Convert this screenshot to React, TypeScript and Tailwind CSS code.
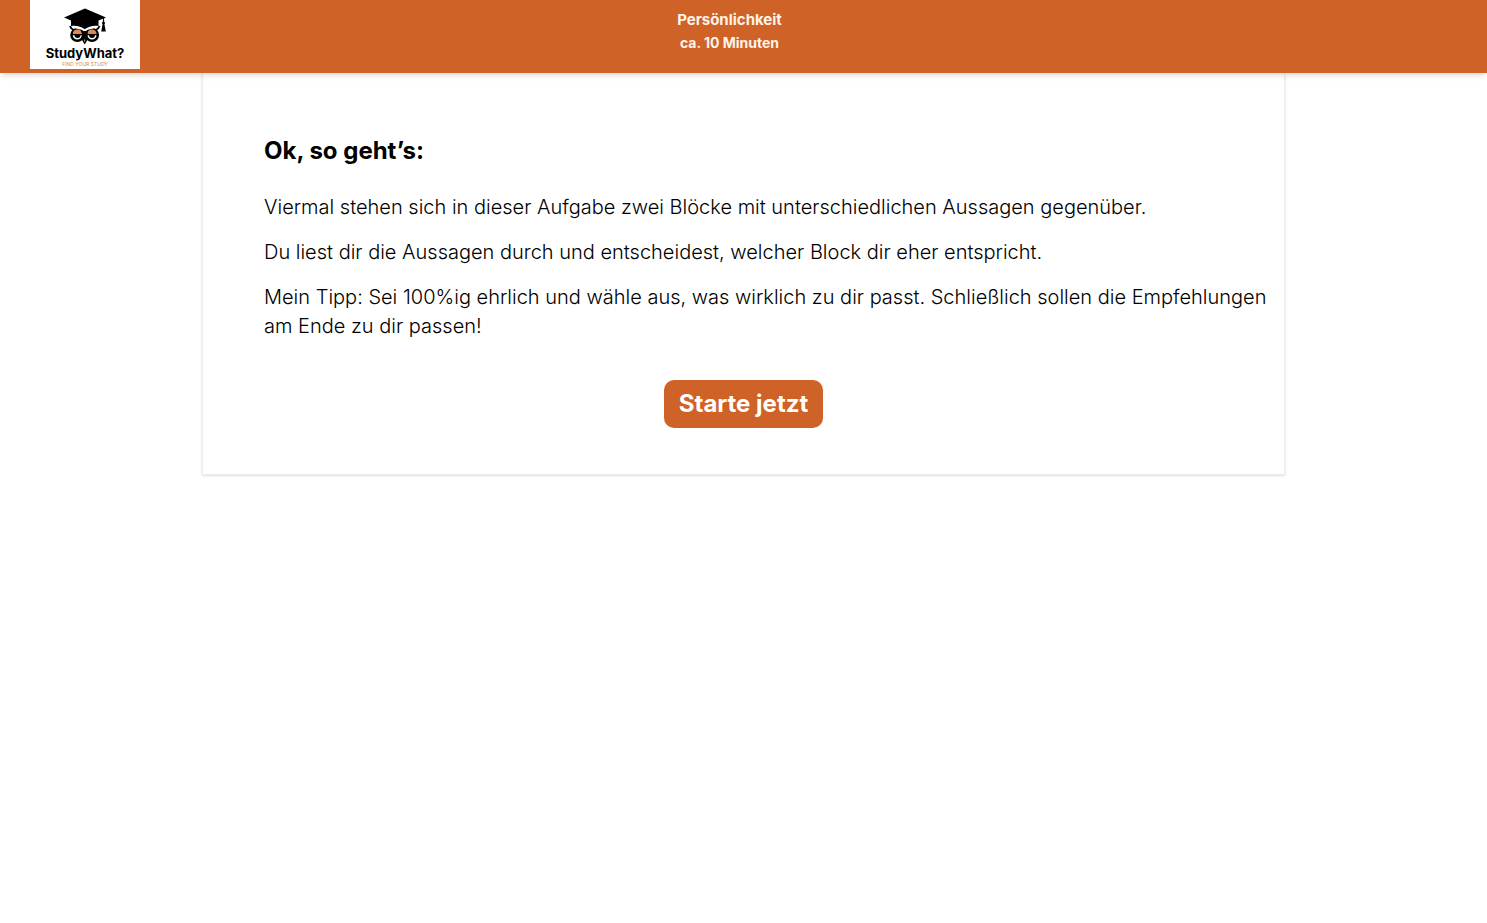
import React from 'react';

const paragraphs = [
  'Viermal stehen sich in dieser Aufgabe zwei Blöcke mit unterschiedlichen Aussagen gegenüber.',
  'Du liest dir die Aussagen durch und entscheidest, welcher Block dir eher entspricht.',
  'Mein Tipp: Sei 100%ig ehrlich und wähle aus, was wirklich zu dir passt. Schließlich sollen die Empfehlungen am Ende zu dir passen!',
];

const OwlIcon: React.FC = () => (
  <svg viewBox="0 0 44 38" className="h-[38px] w-[44px]" aria-hidden="true">
    {/* Brows */}
    <path d="M7 18c1 3.500 4 5 14.700 6.500C32.500 23 35.500 21.500 36.500 18" fill="none" stroke="#000" strokeWidth="1.800" />
    {/* Eyes */}
    <circle cx="14.300" cy="27" r="5.800" fill="#fff" stroke="#000" strokeWidth="2.600" />
    <circle cx="29" cy="27" r="5.800" fill="#fff" stroke="#000" strokeWidth="2.600" />
    <path d="M9.800 26a4.600 4.600 0 0 1 9-1.200V26zM33.500 26a4.600 4.600 0 0 0-9-1.200V26z" fill="#dd8a4c" />
    <path d="M9 26.600h10.500M24 26.600h10.500" stroke="#000" strokeWidth="1.300" />
    <path d="M11.500 27a3 3 0 0 0 6 0zM26 27a3 3 0 0 0 6 0z" fill="#000" />
    {/* Beak */}
    <path d="M18.500 23h6.400l-1 6 .8 2.500-3 5-3-5 .8-2.500z" fill="#000" />
    <path d="M21.700 31.500v2" stroke="#fff" strokeWidth=".8" />
    {/* Cap */}
    <path d="M8.500 12v5.500c3 3.600 8 3.400 13.200 5 5.200-1.600 10.200-1.400 13.300-5V12z" fill="#fff" />
    <path d="M22 .5 1 9.500l7 3v5.500c5-1 10 .5 13.700 3.300C25.500 18.500 30.500 17 35.500 18v-5.500l7.500-3z" fill="#000" />
    <path d="M40.500 10v8" stroke="#000" strokeWidth="1.200" />
    <circle cx="40.500" cy="15" r="1.500" fill="#000" />
    <path d="M39.500 16.500h2l1.300 7h-4.600z" fill="#000" />
  </svg>
);

const Logo: React.FC = () => (
  <a href="#" aria-label="StudyWhat?" className="flex h-[69px] w-[110px] shrink-0 flex-col items-center bg-white pt-2">
    <OwlIcon />
    <span className="text-[13px] leading-[14px] font-bold text-black">StudyWhat?</span>
    <span className="text-[5px] leading-[8px] text-[#d98a5c]">FIND YOUR STUDY</span>
  </a>
);

const Header: React.FC = () => (
  <header className="relative flex h-[73px] items-start bg-[#cf6226] pr-[168px] pl-[30px] shadow-md">
    <Logo />
    <div className="flex-1 pt-2 text-center font-bold text-[#fff3e8]">
      <p className="text-[15px] leading-6">Persönlichkeit</p>
      <p className="text-[14px] leading-[22px]">ca. 10 Minuten</p>
    </div>
  </header>
);

const App: React.FC = () => {
  return (
    <div className="min-h-screen bg-white font-['Inter','Liberation_Sans',sans-serif] text-black">
      <Header />
      <main className="mx-auto max-w-[1083px] border border-t-0 border-[#ececec] px-4 pt-[60px] pb-[46px] shadow-sm md:pl-[61px]">
        <h1 className="text-2xl leading-9 font-bold">Ok, so geht’s:</h1>
        <div className="mt-6 space-y-4 text-xl leading-[29px] font-light">
          {paragraphs.map((text) => (
            <p key={text}>{text}</p>
          ))}
        </div>
        <div className="mt-[39px] flex justify-center md:mr-[45px]">
          <button type="button" className="h-12 rounded-[10px] bg-[#cf6226] px-[15px] text-2xl font-bold text-white">
            Starte jetzt
          </button>
        </div>
      </main>
    </div>
  );
};

export default App;
